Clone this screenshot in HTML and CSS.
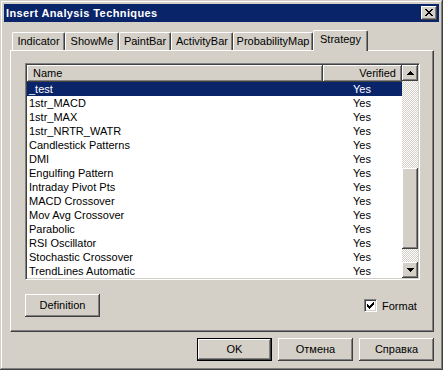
FILE: index.html
```html
<!DOCTYPE html>
<html>
<head>
<meta charset="utf-8">
<link rel="stylesheet" href="styles.css">
</head>
<body>
<div class="window">
  <div class="titlebar">
    <span class="title">Insert Analysis Techniques</span>
    <div class="close raised">
      <svg width="8" height="7" viewBox="0 0 8 7"><path fill="#000" d="M0 0h2v1H0zM6 0h2v1H6zM1 1h2v1H1zM5 1h2v1H5zM2 2h4v1H2zM3 3h2v1H3zM2 4h4v1H2zM1 5h2v1H1zM5 5h2v1H5zM0 6h2v1H0zM6 6h2v1H6z"/></svg>
    </div>
  </div>
  <div class="body">
    <div class="tabs">
      <div class="tab tab-indicator">Indicator</div>
      <div class="tab tab-showme">ShowMe</div>
      <div class="tab tab-paintbar">PaintBar</div>
      <div class="tab tab-activity">ActivityBar</div>
      <div class="tab tab-prob">ProbabilityMap</div>
      <div class="tab tab-strategy active">Strategy</div>
    </div>
    <div class="panel">
      <div class="listbox">
        <div class="listmain">
          <div class="hdr">
            <div class="hcell hname">Name</div>
            <div class="hcell hver">Verified</div>
          </div>
          <div class="row sel"><span class="cname">_test</span><span class="cver">Yes</span></div>
          <div class="row"><span class="cname">1str_MACD</span><span class="cver">Yes</span></div>
          <div class="row"><span class="cname">1str_MAX</span><span class="cver">Yes</span></div>
          <div class="row"><span class="cname">1str_NRTR_WATR</span><span class="cver">Yes</span></div>
          <div class="row"><span class="cname">Candlestick Patterns</span><span class="cver">Yes</span></div>
          <div class="row"><span class="cname">DMI</span><span class="cver">Yes</span></div>
          <div class="row"><span class="cname">Engulfing Pattern</span><span class="cver">Yes</span></div>
          <div class="row"><span class="cname">Intraday Pivot Pts</span><span class="cver">Yes</span></div>
          <div class="row"><span class="cname">MACD Crossover</span><span class="cver">Yes</span></div>
          <div class="row"><span class="cname">Mov Avg Crossover</span><span class="cver">Yes</span></div>
          <div class="row"><span class="cname">Parabolic</span><span class="cver">Yes</span></div>
          <div class="row"><span class="cname">RSI Oscillator</span><span class="cver">Yes</span></div>
          <div class="row"><span class="cname">Stochastic Crossover</span><span class="cver">Yes</span></div>
          <div class="row"><span class="cname">TrendLines Automatic</span><span class="cver">Yes</span></div>
        </div>
        <div class="vscroll">
          <div class="sbtn raised">
            <svg width="7" height="4" viewBox="0 0 7 4"><path fill="#000" d="M3 0h1v1h1v1h1v1h1v1H0V3h1V2h1V1h1z"/></svg>
          </div>
          <div class="track"><div class="thumb raised"></div></div>
          <div class="sbtn raised">
            <svg width="7" height="4" viewBox="0 0 7 4"><path fill="#000" d="M0 0h7v1H6v1H5v1H4v1H3V3H2V2H1V1H0z"/></svg>
          </div>
        </div>
      </div>
      <div class="panel-foot">
        <div class="btn">Definition</div>
        <div class="check">
          <span class="box">
            <svg width="7" height="7" viewBox="0 0 7 7"><path fill="#000" d="M0 2h1v3H0zM1 3h1v3H1zM2 4h1v3H2zM3 3h1v3H3zM4 2h1v3H4zM5 1h1v3H5zM6 0h1v3H6z"/></svg>
          </span>
          <span class="check-label">Format</span>
        </div>
      </div>
    </div>
    <div class="dlg-buttons">
      <div class="btn default">OK</div>
      <div class="btn">Отмена</div>
      <div class="btn">Справка</div>
    </div>
  </div>
</div>
</body>
</html>
```
FILE: styles.css
```css
* {
  box-sizing: border-box;
  margin: 0;
  padding: 0;
}

html, body {
  width: 443px;
  height: 370px;
  overflow: hidden;
  background: #d4d0c8;
}

body {
  font-family: "Liberation Sans", Arial, sans-serif;
  font-size: 11px;
  color: #000;
}

.window {
  width: 443px;
  height: 370px;
  padding: 4px;
  background: #d4d0c8;
  display: flex;
  flex-direction: column;
  box-shadow: inset -1px -1px #404040, inset 1px 1px #d4d0c8, inset -2px -2px #808080, inset 2px 2px #ffffff;
}

.raised {
  background: #d4d0c8;
  box-shadow: inset -1px -1px #404040, inset 1px 1px #ffffff, inset -2px -2px #808080, inset 2px 2px #d4d0c8;
}

.titlebar {
  height: 18px;
  background: #0a246a;
  color: #fff;
  display: flex;
  align-items: center;
  padding: 0 2px 0 2px;
}

.title {
  font-weight: bold;
  font-size: 11px;
  line-height: 18px;
  letter-spacing: 0.4px;
}

.close {
  margin-left: auto;
  width: 16px;
  height: 14px;
  display: flex;
  align-items: center;
  justify-content: center;
  padding-right: 1px;
  padding-bottom: 1px;
}

.close svg, .sbtn svg, .box svg {
  display: block;
}

.body {
  flex: 1;
  display: flex;
  flex-direction: column;
  padding: 8px 5px 0 6px;
}

.tabs {
  height: 20px;
  display: flex;
  align-items: flex-end;
  padding-left: 2px;
}

.tab {
  height: 18px;
  line-height: 16px;
  text-align: center;
  background: #d4d0c8;
  border-top: 1px solid #fff;
  border-left: 1px solid #fff;
  border-right: 1px solid #404040;
  border-radius: 2px 2px 0 0;
  box-shadow: inset -1px 0 #808080;
  white-space: nowrap;
}

.tab-indicator { width: 53px; }
.tab-showme { width: 54px; }
.tab-paintbar { width: 52px; }
.tab-activity { width: 62px; }
.tab-prob { width: 80px; }
.tab-strategy { width: 55px; }

.tab.active {
  height: 21px;
  margin-bottom: -1px;
  line-height: 17px;
  position: relative;
  z-index: 1;
}

.panel {
  height: 282px;
  background: #d4d0c8;
  border-top: 1px solid #fff;
  border-left: 1px solid #fff;
  border-right: 1px solid #404040;
  border-bottom: 1px solid #404040;
  box-shadow: inset -1px -1px #808080;
  padding: 12px 0 0 14px;
}

.listbox {
  width: 395px;
  height: 217px;
  display: flex;
  background: #fff;
  border-top: 1px solid #808080;
  border-left: 1px solid #808080;
  border-right: 1px solid #fff;
  border-bottom: 1px solid #fff;
  box-shadow: inset 1px 1px #404040, inset -1px -1px #d4d0c8;
  padding: 1px;
}

.listmain {
  width: 375px;
  display: flex;
  flex-direction: column;
}

.hdr {
  height: 17px;
  display: flex;
}

.hcell {
  height: 17px;
  line-height: 16px;
  background: #d4d0c8;
  box-shadow: inset -1px -1px #404040, inset 1px 1px #ffffff, inset -2px -2px #808080;
}

.hname {
  width: 296px;
  padding-left: 6px;
}

.hver {
  width: 79px;
  text-align: right;
  padding-right: 6px;
}

.row {
  height: 14px;
  line-height: 14px;
  display: flex;
  white-space: nowrap;
}

.row.sel {
  background: #0a246a;
  color: #fff;
}

.cname {
  width: 296px;
  padding-left: 2px;
}

.cver {
  width: 79px;
  padding-left: 30px;
}

.vscroll {
  width: 16px;
  display: flex;
  flex-direction: column;
}

.sbtn {
  width: 16px;
  height: 16px;
  flex: none;
  display: flex;
  align-items: center;
  justify-content: center;
}

.track {
  flex: 1;
  background-color: #d4d0c8;
  background-image: repeating-conic-gradient(#ffffff 0 25%, #d4d0c8 0 50%);
  background-size: 2px 2px;
}

.thumb {
  height: 81px;
  margin-top: 87px;
}

.panel-foot {
  display: flex;
  align-items: center;
  margin-top: 14px;
}

.btn {
  width: 75px;
  height: 23px;
  line-height: 23px;
  text-align: center;
  background: #d4d0c8;
  box-shadow: inset -1px -1px #404040, inset 1px 1px #ffffff, inset -2px -2px #808080, inset 2px 2px #d4d0c8;
}

.btn.default {
  border: 1px solid #000;
  line-height: 21px;
}

.check {
  display: flex;
  align-items: center;
  margin-left: 264px;
}

.box {
  width: 13px;
  height: 13px;
  background: #fff;
  border-top: 1px solid #808080;
  border-left: 1px solid #808080;
  border-right: 1px solid #fff;
  border-bottom: 1px solid #fff;
  box-shadow: inset 1px 1px #404040, inset -1px -1px #d4d0c8;
  display: flex;
  align-items: center;
  justify-content: center;
}

.check-label {
  margin-left: 5px;
}

.dlg-buttons {
  display: flex;
  justify-content: flex-end;
  gap: 6px;
  margin-top: 6px;
}
```
